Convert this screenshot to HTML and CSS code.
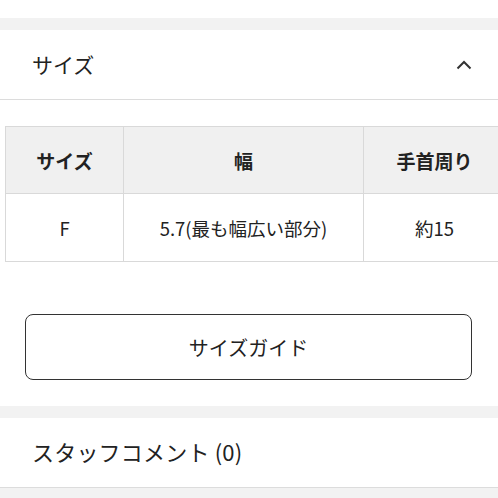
FILE: index.html
```html
<!DOCTYPE html>
<html lang="ja">
<head>
<meta charset="utf-8">
<link rel="stylesheet" href="styles.css">
</head>
<body>
<div class="top-space"></div>
<div class="band"></div>
<div class="acc-head">
  <span class="acc-title">サイズ</span>
  <svg class="chev" width="16" height="10" viewBox="0 0 16 10"><path d="M1.5 8.5 L8 2 L14.5 8.5" fill="none" stroke="#333" stroke-width="2"/></svg>
</div>
<div class="table-wrap">
  <table class="size-table">
    <colgroup><col class="c1"><col class="c2"><col class="c3"></colgroup>
    <thead>
      <tr><th>サイズ</th><th>幅</th><th>手首周り</th></tr>
    </thead>
    <tbody>
      <tr><td>F</td><td>5.7(最も幅広い部分)</td><td>約15</td></tr>
    </tbody>
  </table>
</div>
<div class="btn-wrap">
  <div class="guide-btn">サイズガイド</div>
</div>
<div class="band"></div>
<div class="acc-head staff">
  <span class="acc-title">スタッフコメント (0)</span>
</div>
<div class="band bottom"></div>
</body>
</html>
```

FILE: styles.css
```css
html, body {
  margin: 0;
  padding: 0;
  background: #fff;
  font-family: "Noto Sans CJK JP", "Noto Sans", sans-serif;
  color: #222;
  width: 498px;
  overflow: hidden;
}
.top-space { height: 18px; }
.band { height: 12px; background: #f2f2f2; }
.band.bottom { height: 20px; }
.acc-head {
  height: 69px;
  box-sizing: border-box;
  border-bottom: 1px solid #dcdcdc;
  display: flex;
  align-items: center;
  justify-content: space-between;
  padding: 0 26px 0 32px;
}
.acc-head { height: 70px; }
.acc-title { font-size: 21px; line-height: 1; }
.staff { padding-bottom: 4px; }
.staff .acc-title { font-size: 22px; letter-spacing: 0.2px; }
.chev { display: block; }
.table-wrap {
  padding: 26px 0 0 5px;
  overflow: hidden;
}
.size-table {
  border-collapse: collapse;
  width: 500px;
  table-layout: fixed;
}
.c1 { width: 118px; }
.c2 { width: 240px; }
.c3 { width: 142px; }
.size-table th, .size-table td {
  border: 1px solid #d9d9d9;
  text-align: center;
  padding: 0;
  color: #222;
}
.size-table th {
  background: #f0f0f0;
  height: 66px;
  font-size: 19px;
  font-weight: 700;
}
.size-table td {
  height: 67px;
  font-size: 18.5px;
  font-weight: 400;
}
.btn-wrap {
  padding: 52px 26px 26px 25px;
}
.guide-btn {
  height: 64px;
  border: 1.5px solid #333;
  border-radius: 8px;
  display: flex;
  align-items: center;
  justify-content: center;
  font-size: 20px;
  color: #222;
}
```
